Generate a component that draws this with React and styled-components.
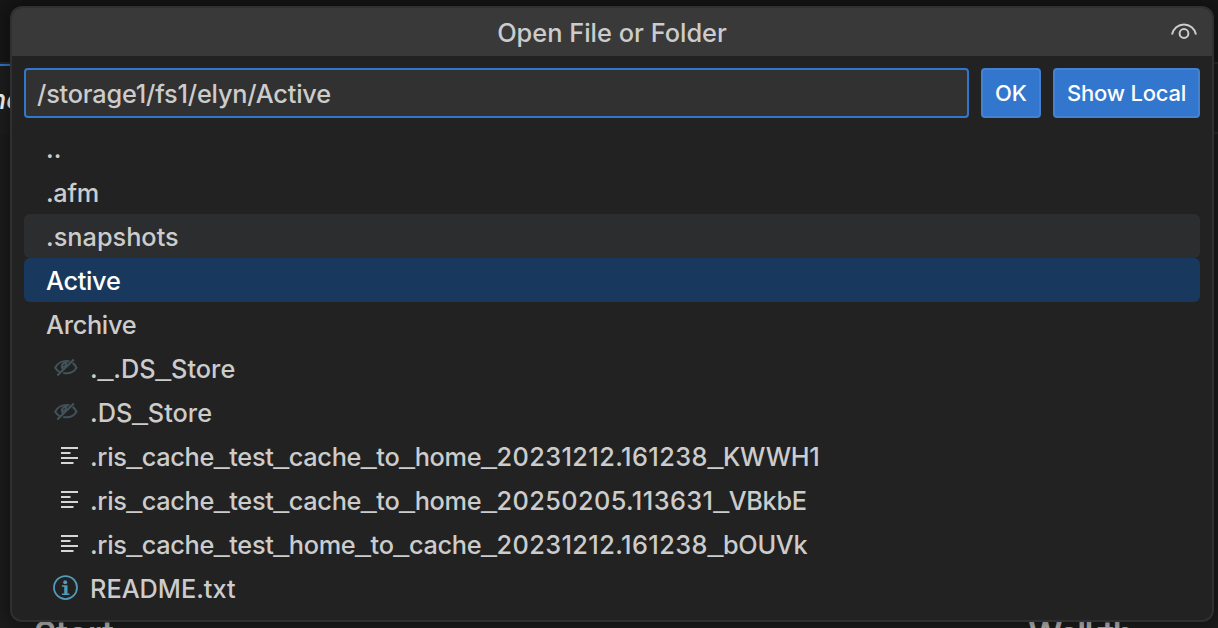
import React from "react";
import styled, { createGlobalStyle } from "styled-components";

const GlobalStyle = createGlobalStyle`
  * { box-sizing: border-box; }
  html, body { margin: 0; height: 100%; overflow: hidden; background: #1a1a1a; }
  body { font-family: Inter, "Liberation Sans", sans-serif; color: #cccccc; }
`;

const Workbench = styled.div`
  position: relative;
  width: 1218px;
  height: 628px;
  overflow: hidden;
  background: #1c1c1c;
  display: flex;
  flex-direction: column;
`;

const TitleStrip = styled.div`
  height: 64px;
  flex: none;
  background: #161616;
  border-bottom: 2px solid #292929;
`;

const TabStrip = styled.div`
  height: 70px;
  flex: none;
  display: flex;
  border-bottom: 2px solid #292929;
`;

const ActiveTab = styled.div`
  width: 200px;
  height: 70px;
  border-top: 2px solid #3376cd;
  background: #1e1e1e;
  line-height: 68px;
  font-size: 27px;
  font-weight: 500;
  font-style: italic;
  color: #ffffff;
  text-indent: -10px;
`;

const WelcomePage = styled.div`
  flex: 1;
  display: flex;
  align-items: flex-end;
  justify-content: space-between;
  padding: 0 16px 0 34px;
`;

const SectionTitle = styled.h2`
  margin: 0 0 -25px;
  width: ${(p) => p.$width}px;
  font-size: 34px;
  line-height: 38px;
  font-weight: 600;
  letter-spacing: ${(p) => p.$spacing || 0}px;
  color: #b4b4b4;
  white-space: nowrap;
`;

const Dialog = styled.section`
  position: absolute;
  top: 6px;
  left: 10px;
  width: 1204px;
  height: 616px;
  border: 2px solid #303031;
  border-radius: 12px;
  overflow: hidden;
  background: #222222;
  box-shadow: 0 0 16px 4px rgba(0, 0, 0, 0.36);
  display: flex;
  flex-direction: column;
`;

const Header = styled.header`
  height: 48px;
  flex: none;
  display: grid;
  grid-template-columns: 44px 1fr 44px;
  align-items: center;
  background: #393939;
`;

const Title = styled.h1`
  grid-column: 2;
  margin: 0;
  padding-top: 2px;
  text-align: center;
  font-size: 25.4px;
  line-height: 30px;
  font-weight: 450;
  white-space: nowrap;
`;

const ToggleButton = styled.button`
  display: flex;
  width: 32px;
  height: 32px;
  padding: 0;
  border: 0;
  background: none;
  color: #cccccc;
`;

const InputBar = styled.div`
  display: flex;
  gap: 12px;
  padding: 12px 12px 8px;
`;

const PathInput = styled.div`
  flex: 1;
  height: 50px;
  padding: 0 11px;
  border: 2px solid #3376cd;
  border-radius: 4px;
  background: #313131;
  line-height: 48px;
  font-size: 25.3px;
  font-weight: 450;
  letter-spacing: -0.2px;
`;

const Button = styled.button`
  width: ${(p) => p.$width}px;
  height: 50px;
  padding: 0;
  border: 2px solid #4481d1;
  border-radius: 4px;
  background: #3376cd;
  color: #ffffff;
  font: 450 22px/46px Inter, sans-serif;
  letter-spacing: ${(p) => p.$spacing || 0}px;
  white-space: nowrap;
`;

const List = styled.ul`
  margin: 0;
  padding: 0 12px;
  list-style: none;
`;

const backgrounds = { hover: "#2c2d2e", selected: "#18395d" };

const Row = styled.li`
  display: flex;
  align-items: center;
  height: 44px;
  padding-left: 22px;
  border-radius: 6px;
  background: ${(p) => backgrounds[p.$state] || "transparent"};
  color: ${(p) => (p.$state === "selected" ? "#ffffff" : "#cccccc")};
`;

const IconSlot = styled.span`
  display: flex;
  width: 44px;
  height: 44px;
  flex: none;
`;

const Name = styled.span`
  font-size: 25.3px;
  font-weight: 450;
  line-height: 44px;
  padding-top: 2px;
  white-space: nowrap;
  letter-spacing: ${(p) => p.$spacing || 0}px;
`;

const Underscore = styled.span`
  font-family: "Liberation Sans", sans-serif;
  font-size: 28px;
  line-height: 0;
  vertical-align: 3px;
`;

const Stamp = styled.span`
  letter-spacing: 0.4px;
`;

const EyeIcon = () => (
  <svg width="32" height="32" viewBox="0 0 32 32" fill="none" stroke="currentColor" strokeWidth="2">
    <path d="M4 18.500C5.200 12.500 10.200 8.500 16 8.500s10.800 4 12 10" />
    <circle cx="16" cy="17.500" r="4.400" />
  </svg>
);

const HiddenIcon = () => (
  <svg width="44" height="44" viewBox="0 0 44 44" fill="none" stroke="#41535b" strokeWidth="2">
    <path d="M23.500 15.200C16.500 13.800 11.500 17.400 9.200 21.700c1.300 2.100 2.900 3.600 4.800 4.600M26.700 16.900c1.500 1.100 2.800 2.700 3.800 4.800-3 4.900-7.500 6.400-13.300 5.300" />
    <path d="M21.500 16.500c-5-.8-7.200 3.600-4.300 7M17 20.700c1.800.4 3.400-1.200 2.800-3.300" />
    <path d="M27.800 13.500 11.300 29.500" strokeWidth="2.200" />
  </svg>
);

const LinesIcon = () => (
  <svg width="44" height="44" viewBox="0 0 44 44" fill="#d4d7d6">
    <rect x="15" y="13" width="17" height="2" />
    <rect x="15" y="18" width="9.500" height="2" />
    <rect x="15" y="23" width="17" height="2" />
    <rect x="15" y="28" width="12.500" height="2" />
  </svg>
);

const InfoIcon = () => (
  <svg width="44" height="44" viewBox="0 0 44 44" fill="#519aba">
    <circle cx="19.500" cy="21.600" r="11.500" fill="none" stroke="#519aba" strokeWidth="1.800" />
    <circle cx="19.200" cy="16.200" r="2" />
    <path d="M15.900 19.300h5.600v8.200h1.900v1.500h-7.500v-1.500h2.300v-6.700h-2.300z" />
  </svg>
);

const icons = { hidden: HiddenIcon, lines: LinesIcon, info: InfoIcon };

const entries = [
  { name: ".." },
  { name: ".afm", spacing: -0.3 },
  { name: ".snapshots", state: "hover" },
  { name: "Active", spacing: -0.3, state: "selected" },
  { name: "Archive", spacing: -0.3 },
  { name: "._.DS_Store", icon: "hidden" },
  { name: ".DS_Store", icon: "hidden" },
  { name: ".ris_cache_test_cache_to_home_20231212.161238_KWWH1", icon: "lines", spacing: -0.32 },
  { name: ".ris_cache_test_cache_to_home_20250205.113631_VBkbE", icon: "lines", spacing: -0.32 },
  { name: ".ris_cache_test_home_to_cache_20231212.161238_bOUVk", icon: "lines", spacing: -0.32 },
  { name: "README.txt", icon: "info" },
];

function renderPart(part, i) {
  if (part === "_") return <Underscore key={i}>_</Underscore>;
  if (/^\d{8}\./.test(part)) return <Stamp key={i}>{part}</Stamp>;
  return part;
}

function Entry({ name, icon, state, spacing }) {
  const Icon = icons[icon];
  return (
    <Row $state={state}>
      {Icon && <IconSlot><Icon /></IconSlot>}
      <Name $spacing={spacing}>{name.split(/(_)/).map(renderPart)}</Name>
    </Row>
  );
}

export default function App() {
  return (
    <Workbench>
      <GlobalStyle />
      <TitleStrip />
      <TabStrip><ActiveTab>ne</ActiveTab></TabStrip>
      <WelcomePage>
        <SectionTitle $width={100}>Start</SectionTitle>
        <SectionTitle $width={174} $spacing={-1.6}>Walkth</SectionTitle>
      </WelcomePage>
      <Dialog>
        <Header>
          <Title>Open File or Folder</Title>
          <ToggleButton aria-label="Toggle hidden files"><EyeIcon /></ToggleButton>
        </Header>
        <InputBar>
          <PathInput>/storage1/fs1/elyn/Active</PathInput>
          <Button $width={60}>OK</Button>
          <Button $width={147} $spacing={-0.2}>Show Local</Button>
        </InputBar>
        <List>
          {entries.map((e) => <Entry key={e.name} {...e} />)}
        </List>
      </Dialog>
    </Workbench>
  );
}
